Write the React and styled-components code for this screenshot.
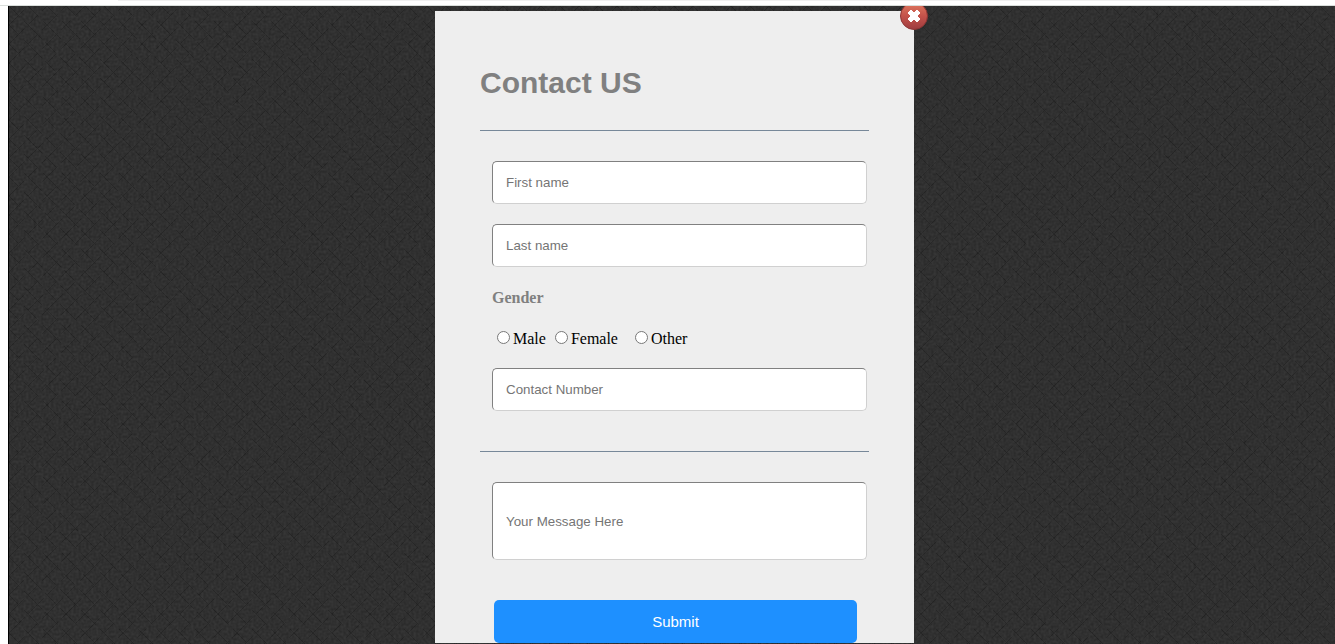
import React from "react";
import styled, { createGlobalStyle } from "styled-components";

const GlobalStyle = createGlobalStyle`
  *, *::before, *::after { box-sizing: border-box; }
  body {
    margin: 0;
    background: #fff;
    color: #000;
    font-family: "Liberation Serif", "Times New Roman", serif;
    font-size: 16px;
  }
`;

const Page = styled.div`
  display: flex;
  flex-direction: column;
  min-height: 100vh;
`;

const TopStrip = styled.header`
  height: 6px;
  padding: 0 56px 0 118px;
  border-bottom: 1px solid #d9dedb;
`;

const TopStripEdge = styled.div`
  height: 1px;
  background: #f0f0f0;
`;

const Stage = styled.main`
  position: relative;
  flex: 1;
  margin-left: 8px;
  padding: 5px 0 1px 5px;
  border-left: 1px solid #000;
  background: #303030;
  overflow: hidden;
`;

const Texture = styled.svg`
  position: absolute;
  inset: 0;
  width: 100%;
  height: 100%;
`;

const Card = styled.section`
  position: relative;
  width: 479px;
  max-width: 100%;
  margin: 0 auto;
  padding: 55px 45px 0;
  background: #eee;
`;

const Title = styled.h1`
  margin: 0;
  color: #808080;
  font-family: "Liberation Sans", Arial, sans-serif;
  font-size: 30px;
  line-height: 34px;
`;

const Divider = styled.hr`
  height: 1px;
  margin: ${({ $space }) => $space}px 0 30px;
  border: 0;
  background: #778899;
`;

const FieldGroup = styled.div`
  display: flex;
  flex-direction: column;
  gap: 20px;
  padding: 0 2px 0 12px;
`;

const Field = styled.input`
  display: block;
  width: 100%;
  height: ${({ $tall }) => ($tall ? "78px" : "43px")};
  margin: 0;
  padding: 12px 13px;
  border: 1px solid;
  border-color: #808080 #d0d0d0 #d0d0d0 #808080;
  border-radius: 5px;
  background: #fff;
  font-family: "Liberation Sans", Arial, sans-serif;

  &::placeholder {
    color: #757575;
    opacity: 1;
  }
`;

const GenderGroup = styled.fieldset`
  min-width: 0;
  margin: 0;
  padding: 0;
  border: 0;
`;

const GenderLegend = styled.legend`
  padding: 0;
  color: #808080;
  font-weight: bold;
  line-height: 22px;
`;

const Options = styled.div`
  display: flex;
  padding: 20px 0 0 5px;
`;

const Option = styled.label`
  display: flex;
  align-items: center;
  gap: 3px;
  margin-right: ${({ $gap }) => $gap || 0}px;
  line-height: 19px;
`;

const Radio = styled.input`
  width: 13px;
  height: 13px;
  margin: 0 0 2px;
`;

const Actions = styled.div`
  padding: 40px 12px 0 14px;
`;

const Submit = styled.button`
  display: block;
  width: 100%;
  height: 43px;
  padding: 0;
  border: 0;
  border-radius: 5px;
  background: #1e90ff;
  color: #fff;
  font-family: "Liberation Sans", Arial, sans-serif;
  font-size: 15px;
  cursor: pointer;
`;

const CloseButton = styled.button`
  position: absolute;
  top: -9px;
  right: -14px;
  width: 28px;
  height: 28px;
  padding: 0;
  border: 0;
  border-radius: 50%;
  background: none;
  cursor: pointer;

  svg { display: block; }
`;

function DarkTexture() {
  return (
    <Texture aria-hidden="true">
      <defs>
        <pattern id="weave" width="76" height="76" patternUnits="userSpaceOnUse">
          <g stroke="#1e1e1e" strokeWidth="1" fill="none">
            <path
              strokeDasharray="22 5 13 7"
              d="M0 76L76 0M0 57L57 0M19 76L76 19M0 38L38 0M38 76L76 38M0 19L19 0M57 76L76 57"
            />
            <path
              strokeDasharray="15 6 26 4"
              d="M0 0L76 76M19 0L76 57M0 19L57 76M38 0L76 38M0 38L38 76M57 0L76 19M0 57L19 76"
            />
          </g>
        </pattern>
        <filter id="grain" x="0" y="0" width="100%" height="100%" colorInterpolationFilters="sRGB">
          <feTurbulence type="fractalNoise" baseFrequency="0.4" numOctaves="1" seed="4" />
          <feColorMatrix values="0.18 0 0 0 0.1  0.18 0 0 0 0.1  0.18 0 0 0 0.1  0 0 0 0 0.5" />
        </filter>
      </defs>
      <rect width="100%" height="100%" fill="url(#weave)" />
      <rect width="100%" height="100%" filter="url(#grain)" />
    </Texture>
  );
}

function CloseIcon() {
  return (
    <svg width="28" height="28" viewBox="0 0 28 28" aria-hidden="true">
      <defs>
        <linearGradient id="closeFill" x1="0" y1="0" x2="0" y2="1">
          <stop offset="0" stopColor="#e07a60" />
          <stop offset="0.5" stopColor="#c4524a" />
          <stop offset="1" stopColor="#9e3c3f" />
        </linearGradient>
      </defs>
      <circle cx="14" cy="14" r="13.5" fill="url(#closeFill)" stroke="#8d3534" />
      <path
        d="M10 8h2v1h1v1h2V9h1V8h2v1h1v1h1v2h-1v1h-1v2h1v1h1v2h-1v1h-1v1h-2v-1h-1v-1h-2v1h-1v1h-2v-1H9v-1H8v-2h1v-1h1v-2H9v-1H8v-2h1V9h1z"
        fill="#fff"
      />
    </svg>
  );
}

export default function App() {
  return (
    <>
      <GlobalStyle />
      <Page>
        <TopStrip>
          <TopStripEdge />
        </TopStrip>
        <Stage>
          <DarkTexture />
          <Card>
            <CloseButton type="button" aria-label="Close">
              <CloseIcon />
            </CloseButton>
            <Title>Contact US</Title>
            <form onSubmit={(event) => event.preventDefault()}>
              <Divider $space={30} />
              <FieldGroup>
                <Field type="text" name="firstName" placeholder="First name" aria-label="First name" />
                <Field type="text" name="lastName" placeholder="Last name" aria-label="Last name" />
                <GenderGroup>
                  <GenderLegend>Gender</GenderLegend>
                  <Options>
                    <Option $gap={9}>
                      <Radio type="radio" name="gender" value="male" />
                      Male
                    </Option>
                    <Option $gap={17}>
                      <Radio type="radio" name="gender" value="female" />
                      Female
                    </Option>
                    <Option>
                      <Radio type="radio" name="gender" value="other" />
                      Other
                    </Option>
                  </Options>
                </GenderGroup>
                <Field type="tel" name="phone" placeholder="Contact Number" aria-label="Contact Number" />
              </FieldGroup>
              <Divider $space={40} />
              <FieldGroup>
                <Field $tall type="text" name="message" placeholder="Your Message Here" aria-label="Your Message Here" />
              </FieldGroup>
              <Actions>
                <Submit type="submit">Submit</Submit>
              </Actions>
            </form>
          </Card>
        </Stage>
      </Page>
    </>
  );
}
